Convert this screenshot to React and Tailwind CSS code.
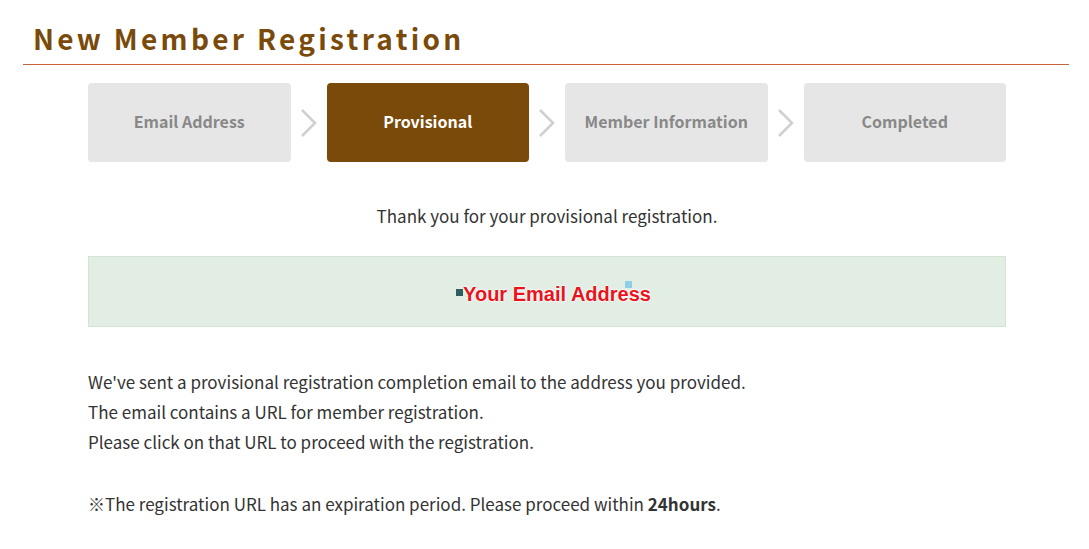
const steps = ["Email Address", "Provisional", "Member Information", "Completed"];

function Chevron() {
  return (
    <div className="w-[36px] shrink-0 flex justify-center">
      <svg width="18" height="30" viewBox="0 0 18 30" fill="none">
        <polyline points="2,2 15,15 2,28" stroke="#d0d0d0" strokeWidth="2.6" />
      </svg>
    </div>
  );
}

export default function App() {
  return (
    <div className="w-[1089px] h-[549px] bg-white overflow-hidden" style={{ fontFamily: '"Noto Sans CJK JP", "Noto Sans", sans-serif' }}>
      <div className="pl-[23px] pr-[20px] pt-[18px]">
        <h1 className="pl-[10px] text-[28px] leading-[40px] font-bold tracking-[3.3px] text-[#7a4a0a]">New Member Registration</h1>
        <div className="mt-[6px] border-b border-[#c8643c]"></div>
      </div>

      <div className="w-[918px] ml-[88px]">
        <div className="flex items-center mt-[18px]">
          {steps.map((s, i) => (
            <div key={s} className={`flex items-center ${i > 0 ? "flex-[1_1_238px]" : "flex-[1_1_202px]"}`}>
              {i > 0 && <Chevron />}
              <div
                className={`flex-1 h-[79px] pb-[3px] rounded-[4px] flex items-center justify-center text-[16px] font-bold ${
                  i === 1 ? "bg-[#7a4a0a] text-white" : "bg-[#e6e6e6] text-[#888888]"
                }`}
              >
                {s}
              </div>
            </div>
          ))}
        </div>

        <p className="mt-[42px] text-center text-[17px] leading-[24px] text-[#333]">Thank you for your provisional registration.</p>

        <div className="mt-[28px] h-[71px] bg-[#e2ede4] border border-[#d2e4d6] flex items-center justify-center">
          <div className="relative ml-[20px] pt-[4px]">
            <span className="absolute left-[-7px] top-[14px] w-[7px] h-[7px] bg-[#2e5e60]"></span>
            <span className="absolute left-[162px] top-[6px] w-[7px] h-[7px] bg-[#8ecfe8]"></span>
            <span
              className="relative text-[20px] font-bold text-[#e8141c]"
              style={{ fontFamily: '"Liberation Sans", Arial, sans-serif', textShadow: "0 0 2px #fff, 0 0 2px #fff, 0 0 2px #fff" }}
            >
              Your Email Address
            </span>
          </div>
        </div>

        <div className="mt-[40px] text-[17px] leading-[30px] text-[#333]">
          <p>We've sent a provisional registration completion email to the address you provided.</p>
          <p>The email contains a URL for member registration.</p>
          <p>Please click on that URL to proceed with the registration.</p>
          <p className="mt-[32px]">
            ※The registration URL has an expiration period. Please proceed within <b>24hours</b>.
          </p>
        </div>
      </div>
    </div>
  );
}
